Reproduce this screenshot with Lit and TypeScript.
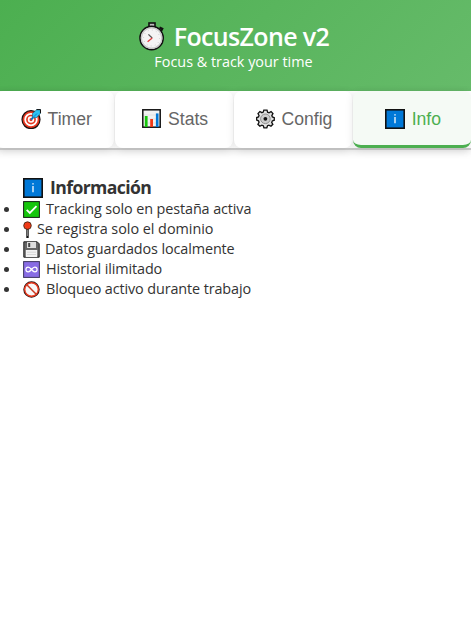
import { LitElement, html, css, svg } from "lit";
import { customElement, property } from "lit/decorators.js";

const icons: Record<string, unknown> = {
  watch: svg`<rect x="11" y="1" width="6" height="5" fill="#bbb" stroke="#111" stroke-width="1.6"/><path d="M21.5 5.5l2.6 1.2-1.5 3" fill="none" stroke="#111" stroke-width="2.4"/><circle cx="13.6" cy="16" r="11.6" fill="#f4f4f4" stroke="#111" stroke-width="1.6"/><circle cx="13.6" cy="16" r="10.2" fill="none" stroke="#c9c9c9" stroke-width="1.2"/><circle cx="13.6" cy="16" r="8" fill="none" stroke="#bbb" stroke-width=".8" stroke-dasharray=".8 3.39"/><path d="M10.4 12.4l3.8 3.6" fill="none" stroke="#555" stroke-width="1.3"/><path d="M14.2 16l-4.6 3.8" stroke="#e23a3a" stroke-width="1.3"/>`,
  target: svg`<circle cx="10" cy="10.6" r="9" fill="#e8371f" stroke="#1c1010" stroke-width="1.2"/><circle cx="10" cy="10.6" r="5.8" fill="none" stroke="#fff" stroke-width="1.8"/><circle cx="10" cy="10.6" r="2.4" fill="#e8371f" stroke="#fff" stroke-width="1.7"/><path d="M10 10.6l3-3" stroke="#0078d7" stroke-width="1.7"/><path d="M11.3 9l.2-4.6 4.3-3.8h3.6v3.8l-3.6 4.1z" fill="#2cc3f2" stroke="#174e6b" stroke-width=".6"/><path d="M12 8.5l4-4" stroke="#0078d7" stroke-width=".9"/><path d="M15.5.6h4v3.6" fill="none" stroke="#111"/>`,
  chart: svg`<rect x=".8" y=".8" width="17.4" height="17.4" fill="#f2f2f2" stroke="#111" stroke-width="1.5"/><path d="M2 6h15M2 10h15M2 14h15" stroke="#ddd" stroke-width=".7"/><path d="M4.2 18V7" stroke="#16c60c" stroke-width="2.8"/><path d="M9.6 18v-8" stroke="#f03a17" stroke-width="2.8"/><path d="M15.2 18V4.4" stroke="#0078d7" stroke-width="2.6"/>`,
  gear: svg`<path d="M7.8 1h3.4l.6 2.3 1.5.6 2.2-1.2 2 2.1-1.2 2.1.6 1.5 2 .7v2.7l-2.1.8-.6 1.5 1.2 2.1-2 2.1-2.2-1.2-1.5.6-.7 2.2H7.9l-.7-2.2-1.5-.6-2.1 1.2-2.1-2.1L2.7 14l-.6-1.5-1.9-.8V9l1.9-.7.6-1.5-1.1-2.1 2-2.1 2.1 1.2 1.5-.6z" transform="translate(.5 .1) scale(.94)" fill="#e2e2e2" stroke="#111" stroke-width="1.4"/><circle cx="9.4" cy="9.8" r="4.8" fill="#ccc" stroke="#888" stroke-width=".9"/><circle cx="9.4" cy="9.8" r="1.9" fill="#111"/>`,
  info: svg`<rect x=".8" y=".8" width="18.4" height="18.4" fill="#0078d7" stroke="#111" stroke-width="1.6"/><path d="M10 8v6.2" stroke="#fff" stroke-width="1.3"/><path d="M9.3 5.2h1.4v1.3H9.3z" fill="#fff"/>`,
  check: svg`<rect x=".6" y=".6" width="15.8" height="15.8" fill="#16c60c" stroke="#142014" stroke-width="1"/><path d="M3.7 8.8l3.1 3.1 6.7-6.8" fill="none" stroke="#fff" stroke-width="1.8"/>`,
  pin: svg`<path d="M4.5 8v9" stroke="#111" stroke-width="2.4"/><path d="M4.5 8.5v6.5" stroke="#999" stroke-width=".8"/><circle cx="4.5" cy="4.6" r="3.8" fill="#f03a17" stroke="#321" stroke-width=".8"/>`,
  disk: svg`<path d="M.8.8h13.4l2 2v13.4H.8z" fill="#666" stroke="#222" stroke-width="1"/><rect x="4" y="1" width="9" height="6" fill="#ddd"/><rect x="5.2" y="2" width="2" height="4" fill="#444"/><rect x="2.8" y="9" width="11.4" height="7" fill="#f3f3f3"/><path d="M4 11.2h9M4 13.5h9" stroke="#ccc" stroke-width=".7"/>`,
  infinity: svg`<rect x=".6" y=".6" width="15.8" height="15.8" fill="#886ce4" stroke="#3d3560" stroke-width="1"/><path d="M8.5 8.5C7.2 6.9 6.3 6.2 5.2 6.2a2.3 2.3 0 000 4.6c1.1 0 2-.7 3.3-2.3s2.2-2.3 3.3-2.3a2.3 2.3 0 010 4.6c-1.1 0-2-.7-3.3-2.3z" fill="none" stroke="#fff" stroke-width="1.2"/>`,
  ban: svg`<circle cx="8.5" cy="8.5" r="7.4" fill="#f8f8f8" stroke="#221010" stroke-width="1.6"/><circle cx="8.5" cy="8.5" r="6.8" fill="none" stroke="#ee3b20" stroke-width="1.4"/><path d="M3.8 3.8l9.4 9.4" stroke="#c93a22" stroke-width="1.5"/>`,
};

const icon = (name: string, w: number, h = w) =>
  html`<svg width=${w} height=${h} viewBox="0 0 ${w} ${h}" aria-hidden="true">${icons[name]}</svg>`;

@customElement("focus-tab")
class FocusTab extends LitElement {
  @property() icon = "";
  @property() label = "";
  @property({ type: Number }) size = 20;
  @property({ type: Boolean, reflect: true }) active = false;
  static styles = css`
    :host { display: block; }
    button {
      box-sizing: border-box; width: 100%; height: 57px; padding: 2px 0 0 2px;
      display: flex; align-items: center; justify-content: center; gap: 7px;
      border: 0; border-bottom: 3px solid transparent; border-radius: 8px;
      background: #fff; color: #666; box-shadow: 0 2px 8px rgba(0, 0, 0, 0.1);
      font: 17.6px/20px "Liberation Sans", Arial, sans-serif;
    }
    :host([active]) button { color: #4caf50; background: #f5faf5; border-bottom-color: #4caf50; }
    svg { display: block; }
  `;
  render() {
    return html`<button>${icon(this.icon, this.size, 20)}<span>${this.label}</span></button>`;
  }
}

@customElement("app-root")
class AppRoot extends LitElement {
  static styles = css`
    :host {
      display: block; height: 619px; overflow: hidden; background: #fff; color: #333;
      font-family: "Segoe UI", "Open Sans", "Noto Sans", sans-serif;
    }
    header {
      height: 91px; box-sizing: border-box; padding: 21px 4px 0 0; color: #fff; text-align: center;
      background: linear-gradient(135deg, #4caf50, #66bb6a);
    }
    h1 {
      margin: 0; height: 30px; display: flex; justify-content: center; align-items: center; gap: 9px;
      font-size: 25px; line-height: 30px; font-weight: 600; letter-spacing: -0.65px;
    }
    header p { margin: 0; padding-top: 1px; font-size: 14.4px; line-height: 20px; letter-spacing: 0; }
    nav {
      display: grid; grid-template-columns: repeat(4, 1fr); gap: 0.5px; margin-left: -4px;
      height: 57px; border-bottom: 2px solid #ccc; box-shadow: 0 2px 8px rgba(0, 0, 0, 0.1);
    }
    main { padding: 27px 0 0 23px; }
    h2 {
      margin: 0; height: 22px; display: flex; align-items: center; gap: 7px;
      font-size: 17.6px; line-height: 22px; font-weight: 700; letter-spacing: -0.6px;
    }
    h2 span { margin-top: -2px; }
    ul { margin: 0 0 0 -17px; padding: 0; list-style: none; }
    li {
      display: flex; align-items: center; height: 20px; gap: 6px;
      font-size: 14.4px; line-height: 20px; letter-spacing: -0.11px;
    }
    li::before {
      content: ""; flex: none; width: 5px; height: 5px; margin: 1px 8px 0 -2px;
      border-radius: 50%; background: #333;
    }
    .tight span { margin-left: -1px; }
    .pin { letter-spacing: -0.03px; }
    svg { display: block; flex: none; }
  `;
  private items: [string, number, string][] = [
    ["check", 17, "Tracking solo en pestaña activa"],
    ["pin", 9, "Se registra solo el dominio"],
    ["disk", 17, "Datos guardados localmente"],
    ["infinity", 17, "Historial ilimitado"],
    ["ban", 17, "Bloqueo activo durante trabajo"],
  ];
  render() {
    return html`
      <header>
        <h1>${icon("watch", 27, 29)}<span>FocusZone v2</span></h1>
        <p><span>Focus &amp; track your time</span></p>
      </header>
      <nav>
        <focus-tab icon="target" label="Timer" size="20"></focus-tab>
        <focus-tab icon="chart" label="Stats" size="19"></focus-tab>
        <focus-tab icon="gear" label="Config" size="19"></focus-tab>
        <focus-tab icon="info" label="Info" size="20" active></focus-tab>
      </nav>
      <main>
        <h2>${icon("info", 20)}<span>Información</span></h2>
        <ul>
          ${this.items.map(([name, w, text]) => html`<li class="${name} ${name === "disk" || name === "pin" ? "tight" : ""}">${icon(name, w, 17)}<span>${text}</span></li>`)}
        </ul>
      </main>
    `;
  }
}
